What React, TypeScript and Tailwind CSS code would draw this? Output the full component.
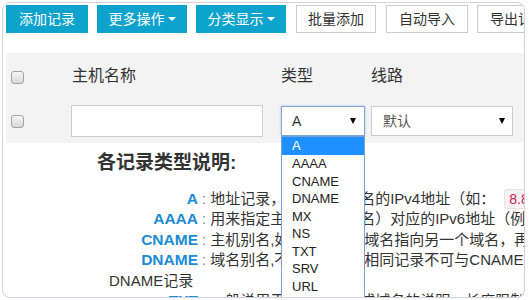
import React from 'react';

const TYPES = ['A', 'AAAA', 'CNAME', 'DNAME', 'MX', 'NS', 'TXT', 'SRV', 'URL', 'AX', 'CX'];

function Checkbox() {
  return (
    <span className="block w-[13px] h-[13px] rounded-[3px] border border-[#a3a3a3] bg-linear-to-b from-[#f6f6f6] to-[#d6d6d6]" />
  );
}

function Caret({ color = 'white' }: { color?: 'white' | 'black' }) {
  return (
    <span
      className={
        color === 'white'
          ? 'ml-[3px] inline-block w-0 h-0 border-x-[4px] border-x-transparent border-t-[4px] border-t-white'
          : 'inline-block w-0 h-0 border-x-[3.5px] border-x-transparent border-t-[6px] border-t-black'
      }
    />
  );
}

function Label({ children }: { children: React.ReactNode }) {
  return (
    <>
      <span className="inline-block w-[89px] text-right text-[15.5px] font-bold text-[#1b8bd6]">{children}</span>
      <span className="mx-[4px] text-[#8a8a8a]">:</span>
    </>
  );
}

export default function App() {
  return (
    <div className="w-[530px] h-[300px] bg-white pt-[2px] pl-[2px] font-['Liberation_Sans','Noto_Sans_CJK_SC',sans-serif] text-[#333]">
      <div className="w-[523px] h-[296px] overflow-hidden rounded-[8px] border border-[#d3d0e2] pl-[3px] pt-[2px]">
        {/* Toolbar */}
        <div className="flex whitespace-nowrap text-[14px]">
          <div className="flex h-[28px] w-[82px] shrink-0 items-center justify-center bg-[#0ea3cd] text-white">添加记录</div>
          <div className="ml-[9px] flex h-[28px] w-[90px] shrink-0 items-center justify-center bg-[#0ea3cd] text-white">
            更多操作<Caret />
          </div>
          <div className="ml-[9px] flex h-[28px] w-[90px] shrink-0 items-center justify-center bg-[#0ea3cd] text-white">
            分类显示<Caret />
          </div>
          <div className="ml-[10px] flex h-[28px] w-[80px] shrink-0 items-center justify-center border border-[#cccccc] bg-white">批量添加</div>
          <div className="ml-[10px] flex h-[28px] w-[82px] shrink-0 items-center justify-center border border-[#cccccc] bg-white">自动导入</div>
          <div className="ml-[9px] flex h-[28px] w-[82px] shrink-0 items-center justify-center border border-[#cccccc] bg-white">导出记录</div>
        </div>

        {/* Table head + add row */}
        <div className="mt-[20px] w-[560px] bg-[#f3f3f3]">
          <div className="grid h-[46px] grid-cols-[65px_210px_90px_1fr] items-center text-[16px]">
            <div className="pl-[5px] pt-[3px]"><Checkbox /></div>
            <div className="pl-[1px]">主机名称</div>
            <div>类型</div>
            <div>线路</div>
          </div>
          <div className="grid h-[44px] grid-cols-[65px_210px_90px_1fr] items-center text-[14px]">
            <div className="pl-[5px] pt-[1px]"><Checkbox /></div>
            <div>
              <div className="h-[32px] w-[192px] border border-[#cccccc] bg-white" />
            </div>
            <div className="relative">
              <div className="flex h-[30px] w-[84px] items-center justify-between border border-[#7ea6dc] bg-white pl-[10px] pr-[8px] shadow-[0_0_2px_rgba(80,140,220,0.5)]">
                <span>A</span>
                <Caret color="black" />
              </div>
              <div className="absolute left-0 top-[30px] z-10 w-[84px] border border-[#7a9ed8] bg-white text-[13px] text-[#222]">
                {TYPES.map((t, i) => (
                  <div
                    key={t}
                    className={
                      i === 0
                        ? 'h-[18px] bg-[#1e90ff] pl-[10px] leading-[18px] text-white'
                        : 'h-[17.5px] pl-[10px] leading-[17.5px]'
                    }
                  >
                    {t}
                  </div>
                ))}
              </div>
            </div>
            <div>
              <div className="flex h-[30px] w-[142px] items-center justify-between border border-[#cccccc] bg-white pl-[11px] pr-[7px] text-[#555]">
                <span>默认</span>
                <Caret color="black" />
              </div>
            </div>
          </div>
        </div>

        {/* Record type help */}
        <div className="mt-[7px] pl-[91px] text-[19px] font-bold leading-[26px]">各记录类型说明:</div>
        <div className="mt-[13px] w-[700px] whitespace-nowrap pl-[103px] text-[15px] leading-[20.4px]">
          <div>
            <Label>A</Label>
            地址记录，用来指定域名的IPv4地址（如：
            <code className="ml-[9px] rounded-[3px] border border-[#e1e1e8] bg-[#f9f2f4] px-[4px] py-[1px] font-['Liberation_Sans',sans-serif] text-[14px] text-[#c7254e]">8.8.8.8</code>
            ），如果需要将域名指向一个IP地址，就需要添加A记录。
          </div>
          <div>
            <Label>AAAA</Label>
            用来指定主机名（或域名）对应的IPv6地址（例如：ff06:0:0:0:0:0:0:c3）记录。
          </div>
          <div>
            <Label>CNAME</Label>
            主机别名,如果您需要将域名指向另一个域名，再由另一个域名提供ip地址，就需要添加CNAME记录。
          </div>
          <div>
            <Label>DNAME</Label>
            域名别名,不同子域名，相同记录不可与CNAME、
          </div>
          <div>DNAME记录</div>
          <div>
            <Label>TXT</Label>
            一般说用于某个主机名或域名的说明，长度限制255，长度超出请分段。
          </div>
        </div>
      </div>
    </div>
  );
}
